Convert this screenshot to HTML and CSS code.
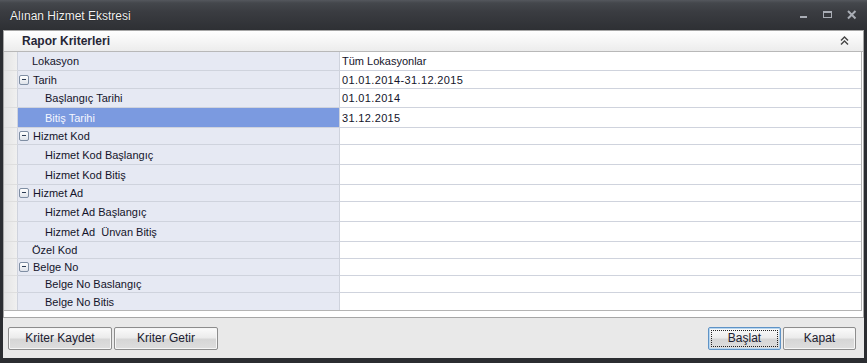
FILE: index.html
```html
<!DOCTYPE html>
<html lang="tr">
<head>
    <meta charset="UTF-8">
    <title>Alınan Hizmet Ekstresi</title>
    <link rel="stylesheet" href="styles.css">
</head>
<body>
    <div class="window">
        <div class="titlebar">
            <span class="title">Alınan Hizmet Ekstresi</span>
            <div class="controls">
                <svg class="ctl" width="10" height="10" viewBox="0 0 10 10"><rect x="1" y="6" width="7" height="2" fill="#a9adb5"/></svg>
                <svg class="ctl" width="10" height="10" viewBox="0 0 10 10"><rect x="0.5" y="1.5" width="8" height="6" fill="none" stroke="#a9adb5"/><rect x="0" y="1" width="9" height="2" fill="#a9adb5"/></svg>
                <svg class="ctl" width="10" height="10" viewBox="0 0 10 10"><path d="M1 1 L8.5 8.5 M8.5 1 L1 8.5" stroke="#a9adb5" stroke-width="2"/></svg>
            </div>
        </div>

        <div class="client">
            <div class="panel">
                <div class="panel-head">
                    <span class="panel-title">Rapor Kriterleri</span>
                    <svg class="collapse" width="9" height="10" viewBox="0 0 9 10">
                        <path d="M1 4.5 L4.5 1 L8 4.5 M1 8.5 L4.5 5 L8 8.5" fill="none" stroke="#444" stroke-width="1.4"/>
                    </svg>
                </div>
                <div class="panel-body">
                    <div class="grid">
                        <div class="row h19"><div class="ind"></div><div class="name">Lokasyon</div><div class="val">Tüm Lokasyonlar</div></div>
                        <div class="row h18"><div class="ind"></div><div class="name cat"><span class="exp"></span>Tarih</div><div class="val num">01.01.2014-31.12.2015</div></div>
                        <div class="row h19"><div class="ind"></div><div class="name sub">Başlangıç Tarihi</div><div class="val num">01.01.2014</div></div>
                        <div class="row h20 sel"><div class="ind"></div><div class="name sub">Bitiş Tarihi</div><div class="val num">31.12.2015</div></div>
                        <div class="row h17"><div class="ind"></div><div class="name cat"><span class="exp"></span>Hizmet Kod</div><div class="val"></div></div>
                        <div class="row h20"><div class="ind"></div><div class="name sub">Hizmet Kod Başlangıç</div><div class="val"></div></div>
                        <div class="row h20"><div class="ind"></div><div class="name sub">Hizmet Kod Bitiş</div><div class="val"></div></div>
                        <div class="row h17"><div class="ind"></div><div class="name cat"><span class="exp"></span>Hizmet Ad</div><div class="val"></div></div>
                        <div class="row h20"><div class="ind"></div><div class="name sub">Hizmet Ad Başlangıç</div><div class="val"></div></div>
                        <div class="row h20"><div class="ind"></div><div class="name sub">Hizmet Ad&nbsp; Ünvan Bitiş</div><div class="val"></div></div>
                        <div class="row h17"><div class="ind"></div><div class="name">Özel Kod</div><div class="val"></div></div>
                        <div class="row h17"><div class="ind"></div><div class="name cat"><span class="exp"></span>Belge No</div><div class="val"></div></div>
                        <div class="row h17"><div class="ind"></div><div class="name sub">Belge No Baslangıç</div><div class="val"></div></div>
                        <div class="row h17"><div class="ind"></div><div class="name sub">Belge No Bitis</div><div class="val"></div></div>
                    </div>
                </div>
            </div>

            <div class="footer">
                <button class="btn">Kriter Kaydet</button>
                <button class="btn">Kriter Getir</button>
                <span class="spacer"></span>
                <button class="btn small focus"><span>Başlat</span></button>
                <button class="btn small">Kapat</button>
            </div>
        </div>
    </div>
</body>
</html>
```

FILE: styles.css
```css
html, body {
    margin: 0;
    padding: 0;
    background: #2c2e32;
    font-family: "Liberation Sans", Arial, sans-serif;
    font-size: 11px;
}

.window {
    width: 867px;
    height: 363px;
    display: flex;
    flex-direction: column;
    background: #2b2d31;
}

.titlebar {
    height: 30px;
    display: flex;
    align-items: center;
    padding-left: 10px;
    background: linear-gradient(#54575d 0, #44474c 3px, #3a3c41 12px, #2e3034 30px);
    box-sizing: border-box;
}

.title {
    color: #f2f2f2;
    font-size: 12px;
    text-shadow: 0 0 1px #000;
    margin-top: 1px;
}

.controls {
    margin-left: auto;
    display: flex;
    align-items: center;
    gap: 14px;
    padding-right: 10px;
    margin-bottom: 1px;
}

.ctl {
    display: block;
}

.client {
    flex: 1;
    margin: 0 3px 5px 3px;
    background: #e9e9e9;
    display: flex;
    flex-direction: column;
}

.panel {
    border: 1px solid #a6a6a6;
    background: #fff;
}

.panel-head {
    height: 20px;
    display: flex;
    align-items: center;
    padding: 0 14px 0 18px;
    background: linear-gradient(#ffffff, #ececec);
    border-bottom: 1px solid #b8b8b8;
}

.panel-title {
    font-size: 12px;
    font-weight: bold;
    color: #262636;
}

.collapse {
    margin-left: auto;
    display: block;
}

.panel-body {
    padding: 0 1px 6px 0;
    background: #fff;
}

.grid {
    border-right: 1px solid #b4b4b4;
    border-bottom: 1px solid #b4b4b4;
}

.row {
    display: grid;
    grid-template-columns: 14px 322px 1fr;
    box-sizing: border-box;
}

.h17 { height: 17px; }
.h18 { height: 18px; }
.h19 { height: 19px; }
.h20 { height: 20px; }

.row > div {
    border-bottom: 1px solid #cfd3dd;
    display: flex;
    align-items: center;
    color: #14142a;
}

.row:last-child > div {
    border-bottom: none;
}

.ind {
    background: linear-gradient(90deg, #e4e4e4, #f0f0f0);
    border-right: 1px solid #cfd3dd;
    border-bottom-color: #dedede !important;
}

.name {
    background: #e6e9f3;
    border-right: 1px solid #cfd3dd;
    padding-left: 14px;
}

.name.cat {
    padding-left: 1px;
}

.name.sub {
    padding-left: 27px;
}

.exp {
    width: 8px;
    height: 8px;
    border: 1px solid #7f8ea3;
    border-radius: 2px;
    background: linear-gradient(#ffffff, #dfe3ea);
    margin-right: 4px;
    position: relative;
}

.exp::after {
    content: '';
    position: absolute;
    left: 2px;
    top: 3px;
    width: 4px;
    height: 1px;
    background: #2c3c55;
}

.sel .name {
    background: #7b9ae0;
    color: #f4f6ff;
}

.val {
    background: #fff;
    padding-left: 2px;
}

.val.num {
    letter-spacing: 0.35px;
}

.footer {
    flex: 1;
    display: flex;
    align-items: center;
    padding: 0 8px 0 5px;
    gap: 2px;
}

.spacer {
    flex: 1;
}

.btn {
    width: 104px;
    height: 23px;
    font-family: "Liberation Sans", Arial, sans-serif;
    font-size: 12px;
    color: #202030;
    border: 1px solid #8d8d8d;
    border-radius: 2px;
    background: linear-gradient(#fbfbfb 0, #ececec 45%, #d6d6d6 55%, #dedede 100%);
    box-shadow: inset 0 0 0 1px #f6f6f6;
    padding: 0;
    margin-top: 0;
}

.btn.small {
    width: 73px;
}

.btn.focus {
    border-color: #5f93c6;
    box-shadow: inset 0 0 0 1px #b7d6f0;
}

.btn.focus span {
    display: block;
    margin: 2px;
    line-height: 15px;
    border: 1px dotted #222;
}
```
